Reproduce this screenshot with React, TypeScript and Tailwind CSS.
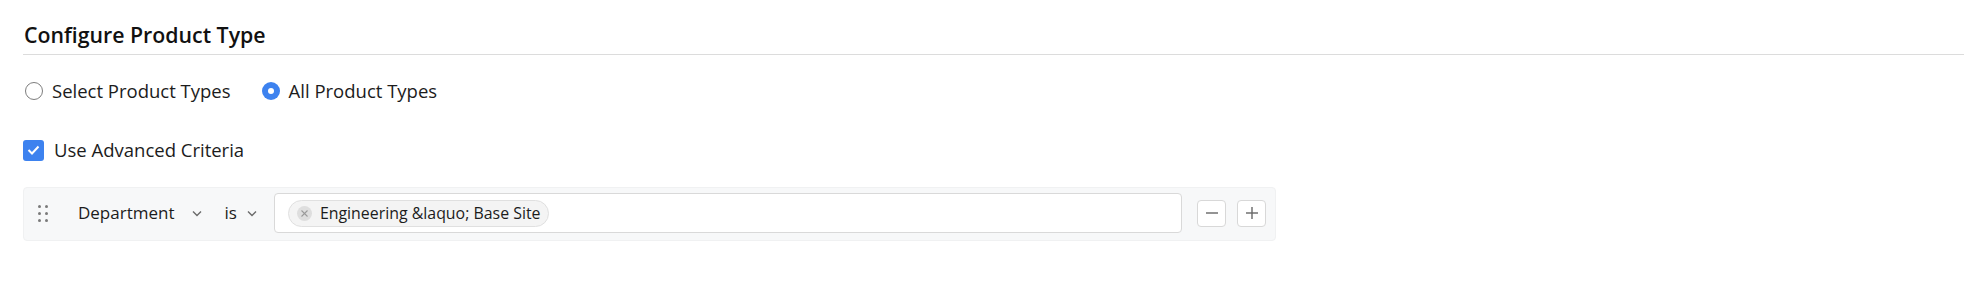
import React from "react";

const font = { fontFamily: '"Open Sans", "Noto Sans", sans-serif' };

const Chevron = () => (
  <svg width="10" height="7" viewBox="0 0 10 7" className="text-[#6b6b6b]">
    <polyline points="1,1.5 5,5.5 9,1.5" fill="none" stroke="currentColor" strokeWidth="1.4" />
  </svg>
);

const DragHandle = () => (
  <div className="grid grid-cols-2 gap-x-[5px] gap-y-[4px] w-[9px]">
    {[0, 1, 2, 3, 4, 5].map((i) => (
      <span key={i} className="w-[3px] h-[3px] rounded-full bg-[#7a7a7a]" />
    ))}
  </div>
);

const Radio = ({ checked, label }: { checked?: boolean; label: string }) => (
  <label className="flex items-center gap-[9px]">
    {checked ? (
      <span className="w-[18px] h-[18px] rounded-full bg-[#3d82ef] flex items-center justify-center">
        <span className="w-[6px] h-[6px] rounded-full bg-white" />
      </span>
    ) : (
      <span className="w-[18px] h-[18px] rounded-full border border-[#7d7d7d] bg-white" />
    )}
    <span className="text-[18.5px] leading-[24px] text-[#1c1c1c]">{label}</span>
  </label>
);

const SquareButton = ({ kind }: { kind: "minus" | "plus" }) => (
  <button className="w-[29px] h-[27px] rounded-[4px] border border-[#d8d8d8] bg-white flex items-center justify-center">
    <svg width="14" height="14" viewBox="0 0 14 14" className="text-[#666]">
      <line x1="1" y1="7" x2="13" y2="7" stroke="currentColor" strokeWidth="1.4" />
      {kind === "plus" && <line x1="7" y1="1" x2="7" y2="13" stroke="currentColor" strokeWidth="1.4" />}
    </svg>
  </button>
);

export default function App() {
  return (
    <div className="w-full h-[298px] bg-white text-[#1c1c1c]" style={font}>
      <div className="ml-[23px] pt-[21px] pb-[5px] border-b border-[#dcdcdc]">
        <h2 className="ml-[1px] text-[21.3px] leading-[28px] font-semibold text-[#111]">Configure Product Type</h2>
      </div>

      <div className="px-[23px]">
        <div className="mt-[24px] flex items-center gap-[31px] pl-[2px]">
          <Radio label="Select Product Types" />
          <Radio checked label="All Product Types" />
        </div>

        <label className="mt-[35px] flex items-center gap-[10px]">
          <span className="w-[21px] h-[21px] rounded-[3px] bg-[#3d82ef] flex items-center justify-center">
            <svg width="13" height="10" viewBox="0 0 13 10">
              <polyline points="1.5,5 5,8.5 11.5,1.5" fill="none" stroke="white" strokeWidth="2" />
            </svg>
          </span>
          <span className="text-[18.5px] leading-[24px]">Use Advanced Criteria</span>
        </label>

        <div className="mt-[25px] w-[1253px] h-[54px] rounded-[4px] bg-[#f7f8f9] border border-[#f0f1f2] flex items-center pl-[14px] pr-[9px] pt-[5px] pb-[7px]">
          <DragHandle />
          <div className="ml-[31px] flex items-center gap-[17px]">
            <span className="text-[17px] leading-[24px]">Department</span>
            <Chevron />
          </div>
          <div className="ml-[23px] flex items-center gap-[10px]">
            <span className="text-[17px] leading-[24px]">is</span>
            <Chevron />
          </div>
          <div className="ml-[17px] w-[909px] h-[40px] rounded-[4px] border border-[#d9d9d9] bg-white flex items-center pl-[13px]">
            <div className="h-[27px] rounded-full border border-[#e0e0e0] bg-[#f4f4f4] flex items-center pl-[8px] pr-[7px] gap-[8px]">
              <span className="w-[15px] h-[15px] rounded-full bg-[#dedede] flex items-center justify-center">
                <svg width="9" height="9" viewBox="0 0 9 9">
                  <line x1="1.5" y1="1.5" x2="7.5" y2="7.5" stroke="#9a9a9a" strokeWidth="1.1" />
                  <line x1="7.5" y1="1.5" x2="1.5" y2="7.5" stroke="#9a9a9a" strokeWidth="1.1" />
                </svg>
              </span>
              <span className="text-[15.9px] leading-[20px] text-[#1c1c1c]">Engineering &amp;laquo; Base Site</span>
            </div>
          </div>
          <div className="ml-[15px] flex items-center gap-[11px]">
            <SquareButton kind="minus" />
            <SquareButton kind="plus" />
          </div>
        </div>
      </div>
    </div>
  );
}
